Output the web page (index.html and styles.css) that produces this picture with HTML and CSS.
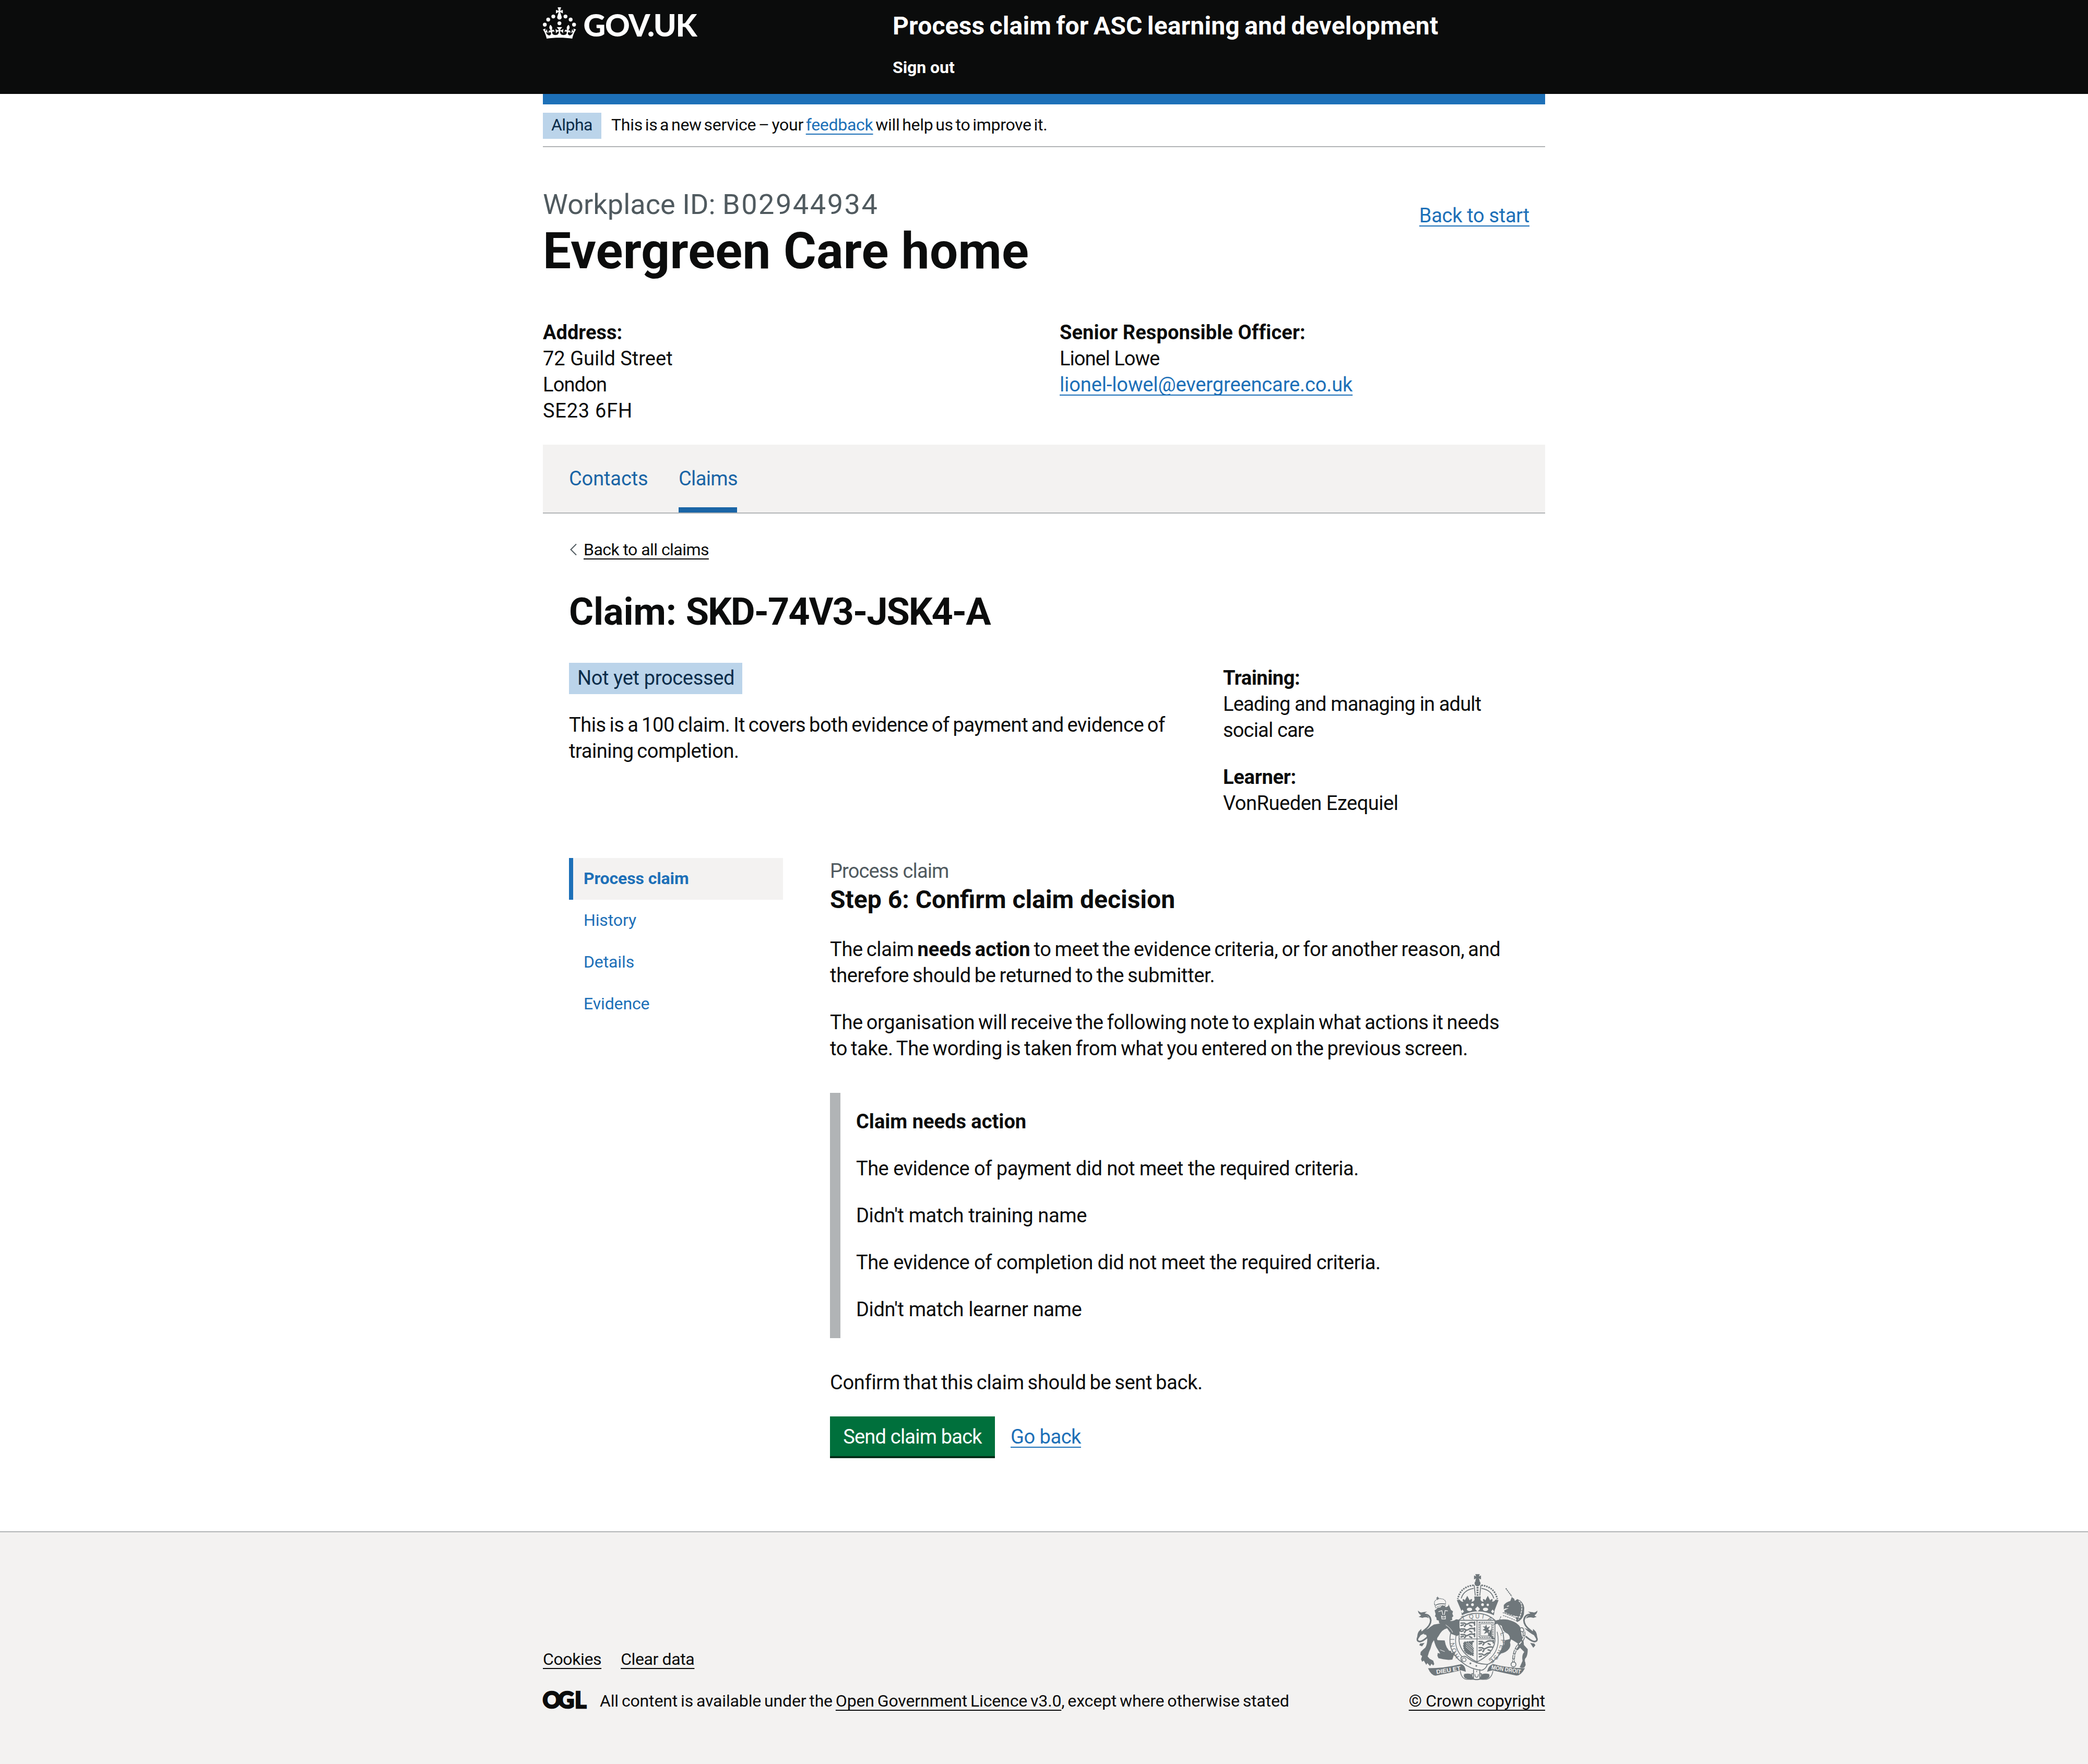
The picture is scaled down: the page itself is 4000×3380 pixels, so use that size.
FILE: index.html
```
<!DOCTYPE html>
<html lang="en">
<head>
<meta charset="utf-8">
<title>Confirm claim decision - Process claim for ASC learning and development</title>
<link rel="stylesheet" href="styles.css">
</head>
<body>
<header class="header">
  <div class="container header-row">
    <a class="header-logo" href="#">
      <svg viewBox="0 0 324 60" width="324" height="60" fill="currentColor" aria-label="GOV.UK">
        <circle cx="20" cy="17.6" r="3.7"/><circle cx="10.2" cy="23.5" r="3.7"/><circle cx="3.7" cy="33.2" r="3.7"/>
        <circle cx="31.7" cy="30.6" r="3.7"/><circle cx="43.3" cy="17.6" r="3.7"/><circle cx="53.2" cy="23.5" r="3.7"/><circle cx="59.7" cy="33.2" r="3.7"/>
        <path d="M33.1,9.8c.2-.1.3-.3.5-.5l4.6,2.4v-6.8l-4.6,1.5c-.1-.2-.3-.3-.5-.5l1.9-5.9h-6.7l1.9,5.9c-.2.1-.3.3-.5.5l-4.6-1.5v6.8l4.6-2.4c.1.2.3.3.5.5l-2.6,8c-.9,2.8,1.2,5.7,4.1,5.7h0c3,0,5.1-2.9,4.1-5.7l-2.6-8ZM37,37.9s-3.4,3.8-4.1,6.1c2.2,0,4.2-.5,6.4-2.8l-.7,8.5c-2-2.8-4.4-4.1-5.7-3.8.1,3.1.5,6.7,5.8,7.2,3.7.3,6.7-1.5,7-3.8.4-2.6-2-4.3-3.7-1.6-1.4-4.5,2.4-6.1,4.9-3.2-1.9-4.5-1.8-7.7,2.4-10.9,3,4,2.6,7.3-1.2,11.1,2.4-1.3,6.2,0,4,4.6-1.2-2.8-3.7-2.2-4.2.2-.3,1.7.7,3.7,3,4.2,1.9.3,4.7-.9,7-5.9-1.3,0-2.4.7-3.9,1.7l2.4-8c.6,2.3,1.4,3.7,2.2,4.5.6-1.6.5-2.8,0-5.3l5,1.8c-2.6,3.6-5.2,8.7-7.3,17.5-7.4-1.1-15.7-1.7-24.5-1.7h0c-8.8,0-17.1.6-24.5,1.7-2.1-8.9-4.7-13.9-7.3-17.5l5-1.8c-.5,2.5-.6,3.7,0,5.3.8-.8,1.6-2.3,2.2-4.5l2.4,8c-1.5-1-2.6-1.7-3.9-1.7,2.3,5,5.2,6.2,7,5.9,2.3-.4,3.3-2.4,3-4.2-.5-2.4-3-3.1-4.2-.2-2.2-4.6,1.6-6,4-4.6-3.7-3.7-4.2-7.1-1.2-11.1,4.2,3.2,4.3,6.4,2.4,10.9,2.5-2.8,6.3-1.3,4.9,3.2-1.8-2.7-4.1-1-3.7,1.6.3,2.3,3.3,4.1,7,3.8,5.4-.5,5.7-4.2,5.8-7.2-1.3-.2-3.7,1-5.7,3.8l-.7-8.5c2.2,2.3,4.2,2.7,6.4,2.8-.7-2.3-4.1-6.1-4.1-6.1h10.6,0Z"/>
        <text class="logo-text" x="77.5" y="56" textLength="218" lengthAdjust="spacing">GOV.UK</text>
      </svg>
    </a>
    <div class="header-content">
      <a class="service-name" href="#">Process claim for ASC learning and development</a>
      <a class="sign-out" href="#">Sign out</a>
    </div>
  </div>
</header>

<div class="container">
  <div class="phase-banner">
    <strong class="tag tag-small">Alpha</strong>
    <span class="phase-text">This is a new service – your <a class="link" href="#">feedback</a> will help us to improve it.</span>
  </div>

  <main>
    <div class="workplace-head">
      <div>
        <span class="caption-xl">Workplace ID: <span class="workplace-id">B02944934</span></span>
        <h1 class="heading-xl">Evergreen Care home</h1>
      </div>
      <a class="link back-start" href="#">Back to start</a>
    </div>

    <div class="workplace-info">
      <div>
        <b class="t0">Address:</b><br><span class="t0">72 Guild Street</span><br><span class="t-22">London</span><br><span class="t20">SE23 6FH</span>
      </div>
      <div>
        <b class="t3">Senior Responsible Officer:</b><br><span class="t-26">Lionel Lowe</span><br><a class="link t-3" href="#">lionel-lowel@evergreencare.co.uk</a>
      </div>
    </div>

    <nav class="tabs">
      <a class="tab t-3" href="#">Contacts</a>
      <a class="tab tab-current t-17" href="#">Claims</a>
    </nav>

    <div class="claim">
      <a class="back-link" href="#">
        <svg class="chevron" viewBox="0 0 16 24" width="16" height="24" fill="none" stroke="#505a5f" stroke-width="2"><path d="M14 1.5 3.5 12 14 22.5"/></svg>
        <span class="back-text">Back to all claims</span>
      </a>
      <h2 class="heading-l">Claim: <span class="claim-ref">SKD-74V3-JSK4-A</span></h2>

      <div class="claim-summary">
        <div class="claim-status">
          <strong class="tag">Not yet processed</strong>
          <p class="claim-lead">This is a 100 claim. It covers both evidence of payment and evidence of training completion.</p>
        </div>
        <div class="claim-meta">
          <p class="t-22"><b class="t-11">Training:</b><br>Leading and managing in adult social care</p>
          <p class="t-12"><b class="t-6">Learner:</b><br>VonRueden Ezequiel</p>
        </div>
      </div>

      <div class="claim-body">
        <nav class="side-nav">
          <a class="side-item side-current" href="#">Process claim</a>
          <a class="side-item" href="#">History</a>
          <a class="side-item" href="#">Details</a>
          <a class="side-item" href="#">Evidence</a>
        </nav>
        <section class="step">
          <span class="caption-m">Process claim</span>
          <h3 class="heading-m">Step 6: Confirm claim decision</h3>
          <p class="prose">The claim <b class="t0">needs action</b> to meet the evidence criteria, or for another reason, and therefore should be returned to the submitter.</p>
          <p class="prose">The organisation will receive the following note to explain what actions it needs to take. The wording is taken from what you entered on the previous screen.</p>
          <div class="inset">
            <p class="t0"><b>Claim needs action</b></p>
            <p class="t-14">The evidence of payment did not meet the required criteria.</p>
            <p class="t-10">Didn't match training name</p>
            <p class="t-14">The evidence of completion did not meet the required criteria.</p>
            <p class="t-10">Didn't match learner name</p>
          </div>
          <p class="prose">Confirm that this claim should be sent back.</p>
          <div class="button-group">
            <button class="button" type="button">Send claim back</button>
            <a class="link t-12" href="#">Go back</a>
          </div>
        </section>
      </div>
    </div>
  </main>
</div>

<footer class="footer">
  <div class="container footer-row">
    <div class="footer-main">
      <div class="footer-links">
        <a class="footer-link" href="#">Cookies</a>
        <a class="footer-link" href="#">Clear data</a>
      </div>
      <div class="licence">
        <svg class="ogl" viewBox="0 0 82 34" width="82" height="34" fill="#0b0c0c" stroke="#0b0c0c"><text class="ogl-text" x="-.5 29 61" y="32.5">OGL</text></svg>
        <span class="licence-text">All content is available under the <a class="footer-link" href="#">Open Government Licence v3.0</a>, except where otherwise stated</span>
      </div>
    </div>
    <a class="crown" href="#">
      <svg class="crest" viewBox="100 108 700 612" width="233" height="204" fill="none" stroke="#6f777b">
        <!-- crown -->
        <g fill="#6f777b" stroke="none">
          <path d="M440 108h26l-5 13 12-5v22l-12-5 5 14h-26l5-14-12 5v-22l12 5z"/>
          <circle cx="453" cy="161" r="17"/>
          <path d="M334 258l16-3q8 14 22 12-8-8-2-16 8 2 10 8l14-26 14 26q4-8 12-8 4 8-2 16 14 0 18-12l-2-18h38l-2 18q4 12 18 12-6-8-2-16 8 0 12 8l14-26 14 26q4-8 12-8 4 8-2 16 14 0 20-12l18 3-22 57-5 30q-90-46-184 0l-5-30z"/>
        </g>
        <path d="M431 172q-76 8-92 80" stroke-width="9" stroke-dasharray="9 5"/>
        <path d="M475 172q76 8 92 80" stroke-width="9" stroke-dasharray="9 5"/>
        <path d="M431 190q-58 10-72 58M475 190q58 10 72 58M434 172l6 60M472 172l-6 60" stroke-width="5"/>
        <path d="M453 168v64" stroke-width="11" stroke-dasharray="9 5"/>
        <g fill="#f3f2f1" stroke="none">
          <path d="M453 294l14 15-14 15-14-15zM366 312l9 11-9 11-9-11zM540 312l9 11-9 11-9-11z"/>
          <ellipse cx="407" cy="311" rx="15" ry="10"/><ellipse cx="499" cy="311" rx="15" ry="10"/>
          <circle cx="394" cy="285" r="7"/><circle cx="424" cy="284" r="8"/><circle cx="482" cy="284" r="8"/><circle cx="512" cy="285" r="7"/>
        </g>
        <!-- garter -->
        <ellipse cx="449" cy="487" rx="155" ry="153" stroke-width="5"/>
        <path d="M334 440q-28 100 48 160M566 440q24 100-48 160M345 376h210" stroke-width="4"/>
        <g class="garter-text" fill="#6f777b" stroke="none">
          <text transform="translate(349 584) rotate(-122)">H</text><text transform="translate(334 556) rotate(-110)">O</text><text transform="translate(323 526) rotate(-98)">N</text><text transform="translate(320 488) rotate(-90)">I</text>
          <text transform="translate(318 440) rotate(-65)">S</text><text transform="translate(334 410) rotate(-50)">O</text>
          <text transform="translate(366 376) rotate(-25)">T</text><text transform="translate(406 366) rotate(-10)">Q</text><text transform="translate(440 363)">U</text><text transform="translate(478 364) rotate(10)">I</text><text transform="translate(510 372) rotate(25)">A</text>
          <text transform="translate(584 446) rotate(75)">L</text><text transform="translate(588 484) rotate(92)">P</text><text transform="translate(584 514) rotate(104)">E</text><text transform="translate(573 542) rotate(112)">N</text><text transform="translate(556 572) rotate(125)">S</text><text transform="translate(536 592) rotate(140)">E</text>
        </g>
        <!-- shield -->
        <path d="M347 374h206v120q-8 72-103 120-95-48-103-120z" fill="#f3f2f1" stroke-width="5"/>
        <path d="M450 374v240M347 481h206" stroke-width="4"/>
        <g stroke-width="8" stroke-linecap="round">
          <path d="M358 390h20q10 12 24 2t32-2M358 404l14-4M384 402l-6 8M408 402l12 6M436 384v18"/>
          <path d="M358 424h20q10 12 24 2t32-2M358 438l14-4M384 436l-6 8M408 436l12 6M436 418v18"/>
          <path d="M358 456h20q10 12 24 2t32-2M358 470l14-4M384 468l-6 6M408 468l12 6M436 450v18"/>
          <path d="M462 496h18q10 12 24 2t38-4M462 510l14-4M490 508l-6 8M514 508l12 6M544 490v14"/>
          <path d="M462 532h18q10 12 24 2t34-6M462 548l14-4M490 546l-6 8M514 544l12 4"/>
          <path d="M462 568h18q10 12 20 2t24-8M464 584l12-4"/>
        </g>
        <path d="M462 386h80v86h-80z" stroke-width="5" stroke-dasharray="10 3"/>
        <path d="M470 394h64v70h-64z" stroke-width="3"/>
        <path d="M482 408l14 12-14 10 18 6-10 16 20-8 8 14v-20l10-4-14-8 12-18-18 8-4-18-8 12z" fill="#6f777b" stroke="none"/>
        <path d="M376 500l56-6q-18 12-4 40v42q-30-4-46-20-14-30-6-56z" fill="#6f777b" stroke-width="6" stroke-dasharray="10 4"/>
        <path d="M388 504l40 36M386 514l40 38M386 526l38 34M398 502l30 26" stroke="#f3f2f1" stroke-width="3"/>
        <!-- strap and buckle -->
        <path d="M358 588q20-16 40 4 44 34 112 36-10 28-34 34-66-8-106-42-14-12-12-32z" fill="#f3f2f1" stroke-width="5"/>
        <circle cx="376" cy="601" r="11" stroke-width="4"/>
        <g fill="#6f777b" stroke="none"><circle cx="412" cy="622" r="5"/><circle cx="446" cy="636" r="5"/></g>
        <path d="M430 656v50M466 656v50M430 682h-10q0 34 28 34t28-34h-10" stroke-width="5"/>
        <path d="M438 684q0 18 10 18t10-18M448 664v8" stroke-width="4"/>
        <!-- lion -->
        <g fill="#6f777b" stroke="none">
          <path d="M206 316l10-6q6-12 22-10l14-14 20 12q16-4 14-18l14 34 12 8-4 14 6 14-8 8 2 14-12 4q2 14-14 14l-14 14-20-8-16-6-2-14-12-4-2-14-8-8 4-12z"/>
          <path d="M238 392l12-10 40-4q24 2 40-10 14 0 18 6v40q10 14 10 24l-14 2 8 14-16 10-14-4-20-8-10-12-14-20q-30 6-50 46-14 16-4 22l40 2q4 24 12 40l14 20q12-4 14 12l22-4q-2 10-10 18l-8 24-22 2-30-4-28-6-6-14 2-16 14 4-14-24q-14-20-22-54-12 16-14 30-4 18-14 38l-8 26 12 14 20 10 6 20-6 8-10-10-8 14-16-18-6 10-14-24-10 6-6-14 6-18-10-8 2-16 16-16 10-8q12-18 12-52l-6-22-16-4q20-32 60-56z"/>
        </g>
        <g stroke="#f3f2f1" stroke-width="5">
          <path d="M228 324l20-6 6 26M282 320l-16-2-4 26M246 350q10 10 22 0v16h-20z" stroke-width="4"/>
          <path d="M270 400q30 20 40 44M238 544l26 10" stroke-width="3"/>
        </g>
        <path d="M206 282q-6-20 16-30 20-6 36 2 16 8 10 28l-2 12q-26-10-54 8z" stroke-width="4" stroke-dasharray="7 3"/>
        <path d="M223 238v18M216 246h15M210 288q24-14 56-8" stroke-width="5"/>
        <!-- lion tail -->
        <path d="M146 340q34 0 38 34 0 30-38 58-46 38-38 58 14 20 62-24" stroke-width="9"/>
        <path d="M110 318q14 14 26 10l28-4q-16 8-16 16 22 8 24 22-14-10-36-2l-22-6q12-4 14-10-16-6-18-26zM104 484l4-30q4-18 22-30-2 12 4 16 20-14 52-22-30 28-60 42l-18 26zM122 508l26-4-14 20-16-6z" fill="#6f777b" stroke="none"/>
        <!-- unicorn -->
        <path d="M616 190l34 46" stroke-width="6" stroke-dasharray="8 3"/>
        <g fill="#6f777b" stroke="none">
          <path d="M604 286q12-16 38-24l8-22 14 10 4 12 14-10q36 14 40 50l-2 36q-8 34-40 46l-8-34q-32 4-68-20l4-14 24-12-20 2-8 6z"/>
          <path d="M560 374q50-14 92 4 30 10 46 34 4 24 10 50 10 20 12 54l22 24q0 30-8 46-14 14-6 30l2 16-8 14-14 2-12-4 16-36q-6-34 10-52l-24-24-16 16-6-10 10-30q-30-20-40-24l-6 18q6 16-4 34-16 24-50 30l-16 10 22-40 14-22 6-26 26-6q4-16-10-30-30-10-36-46l-26-12-20 6-10 16v48l18 16-14 4-18-20-10-4z"/>
        </g>
        <path d="M690 262q20 10 18 44t-22 66M622 294l14-4M600 322q40 28 100 34" stroke="#f3f2f1" stroke-width="5" stroke-dasharray="12 4"/>
        <path d="M588 352q-14 24 0 36M598 330q50 12 94 42M600 346q40 14 84 34" stroke-width="4" stroke-dasharray="9 4"/>
        <!-- unicorn tail -->
        <path d="M760 340q-36 0-40 34 0 30 38 58 44 38 36 58-14 20-64-24" stroke-width="9"/>
        <path d="M798 318q-14 14-26 10l-30-4q16 8 16 16-20 8-26 24 20-12 42-4l20-6q-12-4-12-10 14-6 16-26zM798 484l-4-30q-4-18-22-30 2 12-4 16-20-14-46-22 28 28 56 42l16 26zM780 508l-24-4 18 28 12-14z" fill="#6f777b" stroke="none"/>
        <!-- chain -->
        <path d="M700 418q16-6 20 14-4 12-16 6t-4-20" stroke-width="5"/>
        <path d="M720 440q6 40-26 70-36 40-34 104" stroke-width="15" stroke-dasharray="26 4"/>
        <path d="M720 440q6 40-26 70-36 40-34 104" stroke="#f3f2f1" stroke-width="6" stroke-dasharray="20 10"/>
        <circle cx="660" cy="628" r="14" stroke-width="5"/>
        <!-- motto scroll -->
        <g fill="#6f777b" stroke="none">
          <path d="M168 650q100 0 190-24 24 4 28 44l-28-8q-70 16-142 30-28 4-48-42zM726 650q-96 0-184-24-26 6-34 44l30-8q70 16 138 30 26 2 50-42z"/>
          <path d="M376 684q20-6 40 0l16 28q-24 8-50-4-12-10-6-24zM520 684q-20-6-40 0l-14 28q24 8 48-4 12-10 6-24z"/>
        </g>
        <path d="M354 666q6 44 36 48h114q30-6 38-48" stroke-width="4"/>
        <g class="motto" fill="#f3f2f1" stroke="none">
          <text transform="translate(217 683) rotate(-9)" textLength="142" lengthAdjust="spacingAndGlyphs">DIEU ET</text>
          <text transform="translate(531 655) rotate(9)" textLength="172" lengthAdjust="spacingAndGlyphs">MON DROIT</text>
        </g>
      </svg>
      <span class="crown-text">© Crown copyright</span>
    </a>
  </div>
</footer>
</body>
</html>
```
FILE: styles.css
```
* { box-sizing: border-box; }

body {
  margin: 0;
  background: #fff;
  color: #0b0c0c;
  font: 38px/50px Roboto, "Liberation Sans", sans-serif;
}

a { color: inherit; text-decoration: none; }
h1, h2, h3, p { margin: 0; }
svg { display: block; overflow: visible; }

.container { width: 1920px; margin: 0 auto; }

.link, .back-text, .footer-link, .crown-text {
  text-decoration: underline;
  text-decoration-thickness: 2px;
  text-underline-offset: 6px;
  text-decoration-skip-ink: none;
}
.link { color: #1d70b8; }

/* Tracking */
.t20 { letter-spacing: .0201em; }
.t3 { letter-spacing: .0027em; }
.t0 { letter-spacing: 0; }
.t-3 { letter-spacing: -.0031em; }
.t-6 { letter-spacing: -.006em; }
.t-10 { letter-spacing: -.0095em; }
.t-11 { letter-spacing: -.011em; }
.t-12 { letter-spacing: -.0123em; }
.t-14 { letter-spacing: -.0135em; }
.t-17 { letter-spacing: -.0172em; }
.t-22 { letter-spacing: -.022em; }
.t-26 { letter-spacing: -.026em; }
.prose { letter-spacing: -.0078em; word-spacing: -.06em; }

/* Header */
.header { height: 180px; background: #0b0c0c; color: #fff; }
.header-row { display: flex; }
.header-logo { width: 670px; padding-top: 14px; }
.logo-text { font: 900 59px Lato, Roboto, sans-serif; }
.header-content { display: flex; flex-direction: column; align-items: flex-start; padding-top: 20px; }
.service-name { font-size: 48px; line-height: 60px; font-weight: 700; letter-spacing: .0035em; word-spacing: -.06em; }
.sign-out { margin-top: 29px; font-size: 32px; line-height: 40px; font-weight: 700; letter-spacing: -.0015em; }

/* Phase banner */
.phase-banner {
  display: flex;
  height: 102px;
  border-top: 20px solid #1d70b8;
  border-bottom: 2px solid #b1b4b6;
  padding-top: 16px;
  font-size: 32px;
  line-height: 40px;
}
.tag {
  display: inline-block;
  padding: 4px 16px 6px;
  background: #bbd4ea;
  color: #0c2d4a;
  font-weight: 400;
  letter-spacing: -.0087em;
  white-space: nowrap;
}
.tag-small { width: 112px; height: 50px; padding: 3px 16px 7px; letter-spacing: -.0176em; }
.phase-text { margin-left: 19px; padding-top: 3px; letter-spacing: -.009em; word-spacing: -.09em; }

/* Workplace */
.workplace-head { display: flex; justify-content: space-between; padding: 80px 30px 0 0; }
.caption-xl { display: block; color: #505a5f; font-size: 54px; line-height: 60px; letter-spacing: .001em; }
.workplace-id { letter-spacing: .047em; }
.heading-xl { margin-top: 9px; font-size: 96px; line-height: 100px; letter-spacing: .0037em; }
.back-start { margin-top: 26px; letter-spacing: -.0079em; }
.workplace-info { display: grid; grid-template-columns: 990px 1fr; margin-top: 81px; }

.tabs {
  display: flex;
  gap: 60px;
  height: 132px;
  margin-top: 40px;
  padding: 0 50px;
  background: #f3f2f1;
  border-bottom: 2px solid #b1b4b6;
  color: #1a65a6;
}
.tab { width: 150px; padding-top: 40px; }
.tab-current { width: 112px; border-bottom: 10px solid #1a65a6; }

/* Claim */
.claim { padding: 49px 50px 144px; }
.back-link { display: flex; align-items: center; width: max-content; font-size: 32px; line-height: 40px; letter-spacing: -.0172em; }
.chevron { margin-right: 12px; }
.heading-l { margin-top: 60px; font-size: 72px; line-height: 80px; letter-spacing: -.001em; }
.claim-ref { letter-spacing: -.028em; }
.claim-summary { display: flex; margin-top: 57px; }
.claim-status { width: 1253px; }
.claim-status .tag { display: block; width: 332px; }
.claim-lead { width: 1190px; margin-top: 34px; letter-spacing: -.0113em; word-spacing: -.06em; }
.claim-meta { flex: 1; display: flex; flex-direction: column; gap: 40px; padding-top: 4px; }

.claim-body { display: grid; grid-template-columns: 410px 1310px; gap: 90px; margin-top: 80px; }
.side-nav { display: flex; flex-direction: column; }
.side-item {
  height: 80px;
  padding: 19px 0 0 20px;
  border-left: 8px solid transparent;
  color: #1d70b8;
  font-size: 32px;
  line-height: 40px;
  letter-spacing: -.004em;
}
.side-current { border-color: #1d70b8; background: #f3f2f1; font-weight: 700; }

.step > p + p { margin-top: 40px; }
.caption-m { display: block; color: #505a5f; letter-spacing: -.0239em; }
.heading-m { margin-bottom: 40px; font-size: 48px; line-height: 60px; }
.inset { display: flex; flex-direction: column; gap: 40px; margin: 60px 0; padding: 30px; border-left: 20px solid #b1b4b6; }
.button-group { display: flex; gap: 30px; margin-top: 40px; line-height: 50px; }
.button {
  width: 316px;
  height: 76px;
  padding: 2px 0 0;
  border: 0;
  background: #00703c;
  box-shadow: 0 4px 0 #002d18;
  color: #fff;
  font: inherit;
  letter-spacing: -.0211em;
}
.button-group .link { padding-top: 14px; }

/* Footer */
.footer { height: 446px; padding-top: 80px; background: #f3f2f1; border-top: 2px solid #b1b4b6; font-size: 32px; line-height: 40px; }
.footer-row { display: flex; justify-content: space-between; align-items: flex-end; }
.footer-links { display: flex; gap: 37px; letter-spacing: -.012em; }
.licence { display: flex; margin-top: 40px; }
.ogl { margin: 1px 27px 0 0; }
.ogl-text { font: 900 43px Lato, Roboto, sans-serif; stroke-width: 2.5px; }
.licence-text { letter-spacing: -.0045em; word-spacing: -.06em; }
.crown { display: flex; flex-direction: column; align-items: center; }
.crest { margin-bottom: 19px; }
.crown-text { letter-spacing: -.0068em; }
.motto { font: 700 34px "Liberation Sans", sans-serif; }
.garter-text { font: 400 34px "Liberation Sans", sans-serif; }
```
